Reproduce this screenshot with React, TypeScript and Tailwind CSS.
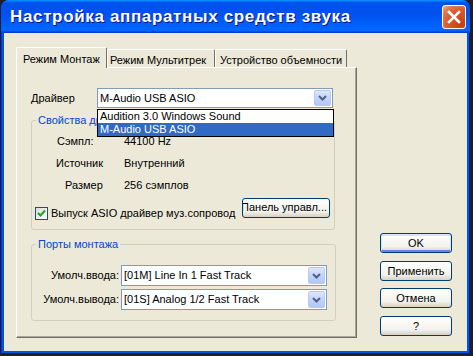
import React from 'react';

function DropArrow() {
  return (
    <div className="w-[17px] self-stretch m-[1px] rounded-[2px] border border-[#B6CAF5] bg-[linear-gradient(to_bottom,#DCE6FD,#C3D4FA_50%,#B2C7F6)] flex items-center justify-center">
      <svg width="9" height="6" viewBox="0 0 9 6">
        <path d="M1 1 L4.5 4.5 L8 1" fill="none" stroke="#4D6185" strokeWidth="2" />
      </svg>
    </div>
  );
}

function Combo({ text, className, children }: { text: string; className: string; children?: React.ReactNode }) {
  return (
    <div className={`relative flex items-stretch bg-white border border-[#7F9DB9] ${className}`}>
      <span className="flex-1 flex items-center pl-[2px] whitespace-nowrap overflow-hidden">{text}</span>
      <DropArrow />
      {children}
    </div>
  );
}

function XpButton({ label, isDefault }: { label: string; isDefault?: boolean }) {
  return (
    <button
      type="button"
      className={`w-[72px] h-[20px] rounded-[3px] border border-[#003C74] bg-[linear-gradient(to_bottom,#FFFFFF,#F3F2EC_70%,#D6D0C5)] text-[11px] leading-none text-black ${
        isDefault ? 'shadow-[inset_0_1px_0_1px_#CEE7FF,inset_0_-1px_0_1px_#6982EE]' : ''
      }`}
    >
      {label}
    </button>
  );
}

export default function App() {
  return (
    <div className="w-[473px] h-[356px] bg-[#1E1F24] overflow-hidden font-['Liberation_Sans',Arial,sans-serif] text-[11px] text-black">
      <div className="ml-[1px] w-[469px] h-[354px] rounded-t-[8px] overflow-hidden bg-[#0054E3] shadow-[inset_1px_0_#0831D9,inset_-1px_0_#001EA0,inset_0_-1px_#001EA0] flex flex-col">
        {/* Title bar */}
        <div className="h-[33px] shrink-0 flex items-center bg-[linear-gradient(to_bottom,#0997FF_0%,#0053EE_8%,#0050EE_40%,#0066FF_88%,#0066FF_93%,#005BFF_95%,#003DD7_96%,#003DD7_100%)]">
          <span className="pl-[9px] text-[17px] font-bold text-white tracking-[0.65px] [text-shadow:1px_1px_#0F1089]">
            Настройка аппаратных средств звука
          </span>
          <div className="ml-auto mr-[4px] w-[24px] h-[24px] rounded-[3px] border border-white bg-[radial-gradient(circle_at_85%_85%,#C43E0E_0%,#DA5A2E_55%,#E27A55_80%,#F2B49A_100%)] flex items-center justify-center">
            <svg width="14" height="14" viewBox="0 0 14 14">
              <path d="M2 2 L12 12 M12 2 L2 12" stroke="white" strokeWidth="2.6" strokeLinecap="square" />
            </svg>
          </div>
        </div>

        {/* Client area */}
        <div className="flex-1 mx-[3px] mb-[3px] bg-[#ECE9D8] flex pl-[12px] pt-[14px]">
          {/* Tab control */}
          <div className="w-[341px] flex flex-col">
            <div className="flex items-end h-[20px]">
              <div className="relative z-10 w-[91px] h-[21px] -mb-[1px] bg-[#ECE9D8] border-l border-t border-white border-r border-r-[#716F64] rounded-t-[2px] pl-[6px] pt-[3px] whitespace-nowrap">
                Режим Монтаж
              </div>
              <div className="w-[108px] h-[18px] bg-[#ECE9D8] border-l border-t border-white border-r border-r-[#716F64] rounded-t-[2px] pl-[2px] pt-[2px] whitespace-nowrap">
                Режим Мультитрек
              </div>
              <div className="w-[132px] h-[18px] bg-[#ECE9D8] border-l border-t border-white border-r border-r-[#716F64] rounded-t-[2px] pl-[4px] pt-[2px] whitespace-nowrap">
                Устройство объемности
              </div>
            </div>

            <div className="h-[271px] border-l border-t border-white border-r border-b border-r-[#716F64] border-b-[#716F64] shadow-[inset_-1px_-1px_0_#ACA899] pl-[14px] pt-[20px]">
              {/* Driver row */}
              <div className="flex items-center h-[20px]">
                <span className="w-[66px]">Драйвер</span>
                <Combo text="M-Audio USB ASIO" className="w-[236px] h-[20px]">
                  <div className="absolute z-20 left-[-1px] top-[20px] w-[237px] h-[28px] bg-white border border-black flex flex-col">
                    <div className="h-[13px] leading-[13px] pl-[2px] whitespace-nowrap">Audition 3.0 Windows Sound</div>
                    <div className="h-[13px] leading-[13px] pl-[2px] bg-[#316AC5] text-white whitespace-nowrap">M-Audio USB ASIO</div>
                  </div>
                </Combo>
              </div>

              {/* Driver properties */}
              <fieldset className="mt-[6px] w-[304px] border border-[#D0D0BF] rounded-[3px] pl-[3px] pr-[4px] pb-[7px]">
                <legend className="ml-[1px] px-[2px] leading-[13px] text-[#0046D5]">Свойства драйвера</legend>
                <div className="mt-[3px] h-[22px] flex items-center">
                  <span className="w-[89px] pl-[22px]">Сэмпл:</span>
                  <span>44100 Hz</span>
                </div>
                <div className="h-[22px] flex items-center">
                  <span className="w-[89px] pl-[21px]">Источник</span>
                  <span>Внутренний</span>
                </div>
                <div className="h-[22px] flex items-center">
                  <span className="w-[89px] pl-[30px]">Размер</span>
                  <span>256 сэмплов</span>
                </div>
                <div className="h-[26px] flex items-start">
                  <label className="mt-[11px] flex items-center gap-[3px] h-[13px] whitespace-nowrap">
                    <span className="w-[13px] h-[13px] border border-[#1C5180] bg-[linear-gradient(135deg,#DCDCD7,#FFFFFF)] flex items-center justify-center">
                      <svg width="9" height="9" viewBox="0 0 9 9">
                        <path d="M1 4 L3.5 6.5 L8 1.5" fill="none" stroke="#21A121" strokeWidth="2" />
                      </svg>
                    </span>
                    Выпуск ASIO драйвер муз.сопровод
                  </label>
                  <button
                    type="button"
                    className="ml-auto mt-[1.5px] w-[88px] h-[20px] rounded-[3px] border border-[#003C74] bg-[linear-gradient(to_bottom,#FFFFFF,#F3F2EC_70%,#D6D0C5)] flex items-center justify-end pr-[2px] overflow-hidden whitespace-nowrap text-[11px]"
                  >
                    Панель управл...
                  </button>
                </div>
              </fieldset>

              {/* Ports */}
              <fieldset className="mt-[8px] w-[305px] border border-[#D0D0BF] rounded-[3px] pl-[3px] pr-[4px] pb-[10px]">
                <legend className="ml-[1px] px-[2px] leading-[13px] text-[#0046D5]">Порты монтажа</legend>
                <div className="mt-[14px] flex flex-col gap-[3px]">
                  <div className="flex items-center">
                    <span className="w-[84px] text-right whitespace-nowrap">Умолч.ввода:</span>
                    <Combo text="[01M] Line In 1 Fast Track" className="ml-[2px] w-[206px] h-[21px]" />
                  </div>
                  <div className="flex items-center">
                    <span className="w-[84px] text-right whitespace-nowrap">Умолч.вывода:</span>
                    <Combo text="[01S] Analog 1/2 Fast Track" className="ml-[2px] w-[206px] h-[21px]" />
                  </div>
                </div>
              </fieldset>
            </div>
          </div>

          {/* Dialog buttons */}
          <div className="ml-[23px] pt-[186px] flex flex-col">
            <XpButton label="OK" isDefault />
            <div className="mt-[8px]">
              <XpButton label="Применить" />
            </div>
            <div className="mt-[7px]">
              <XpButton label="Отмена" />
            </div>
            <div className="mt-[8px]">
              <XpButton label="?" />
            </div>
          </div>
        </div>
      </div>
    </div>
  );
}
